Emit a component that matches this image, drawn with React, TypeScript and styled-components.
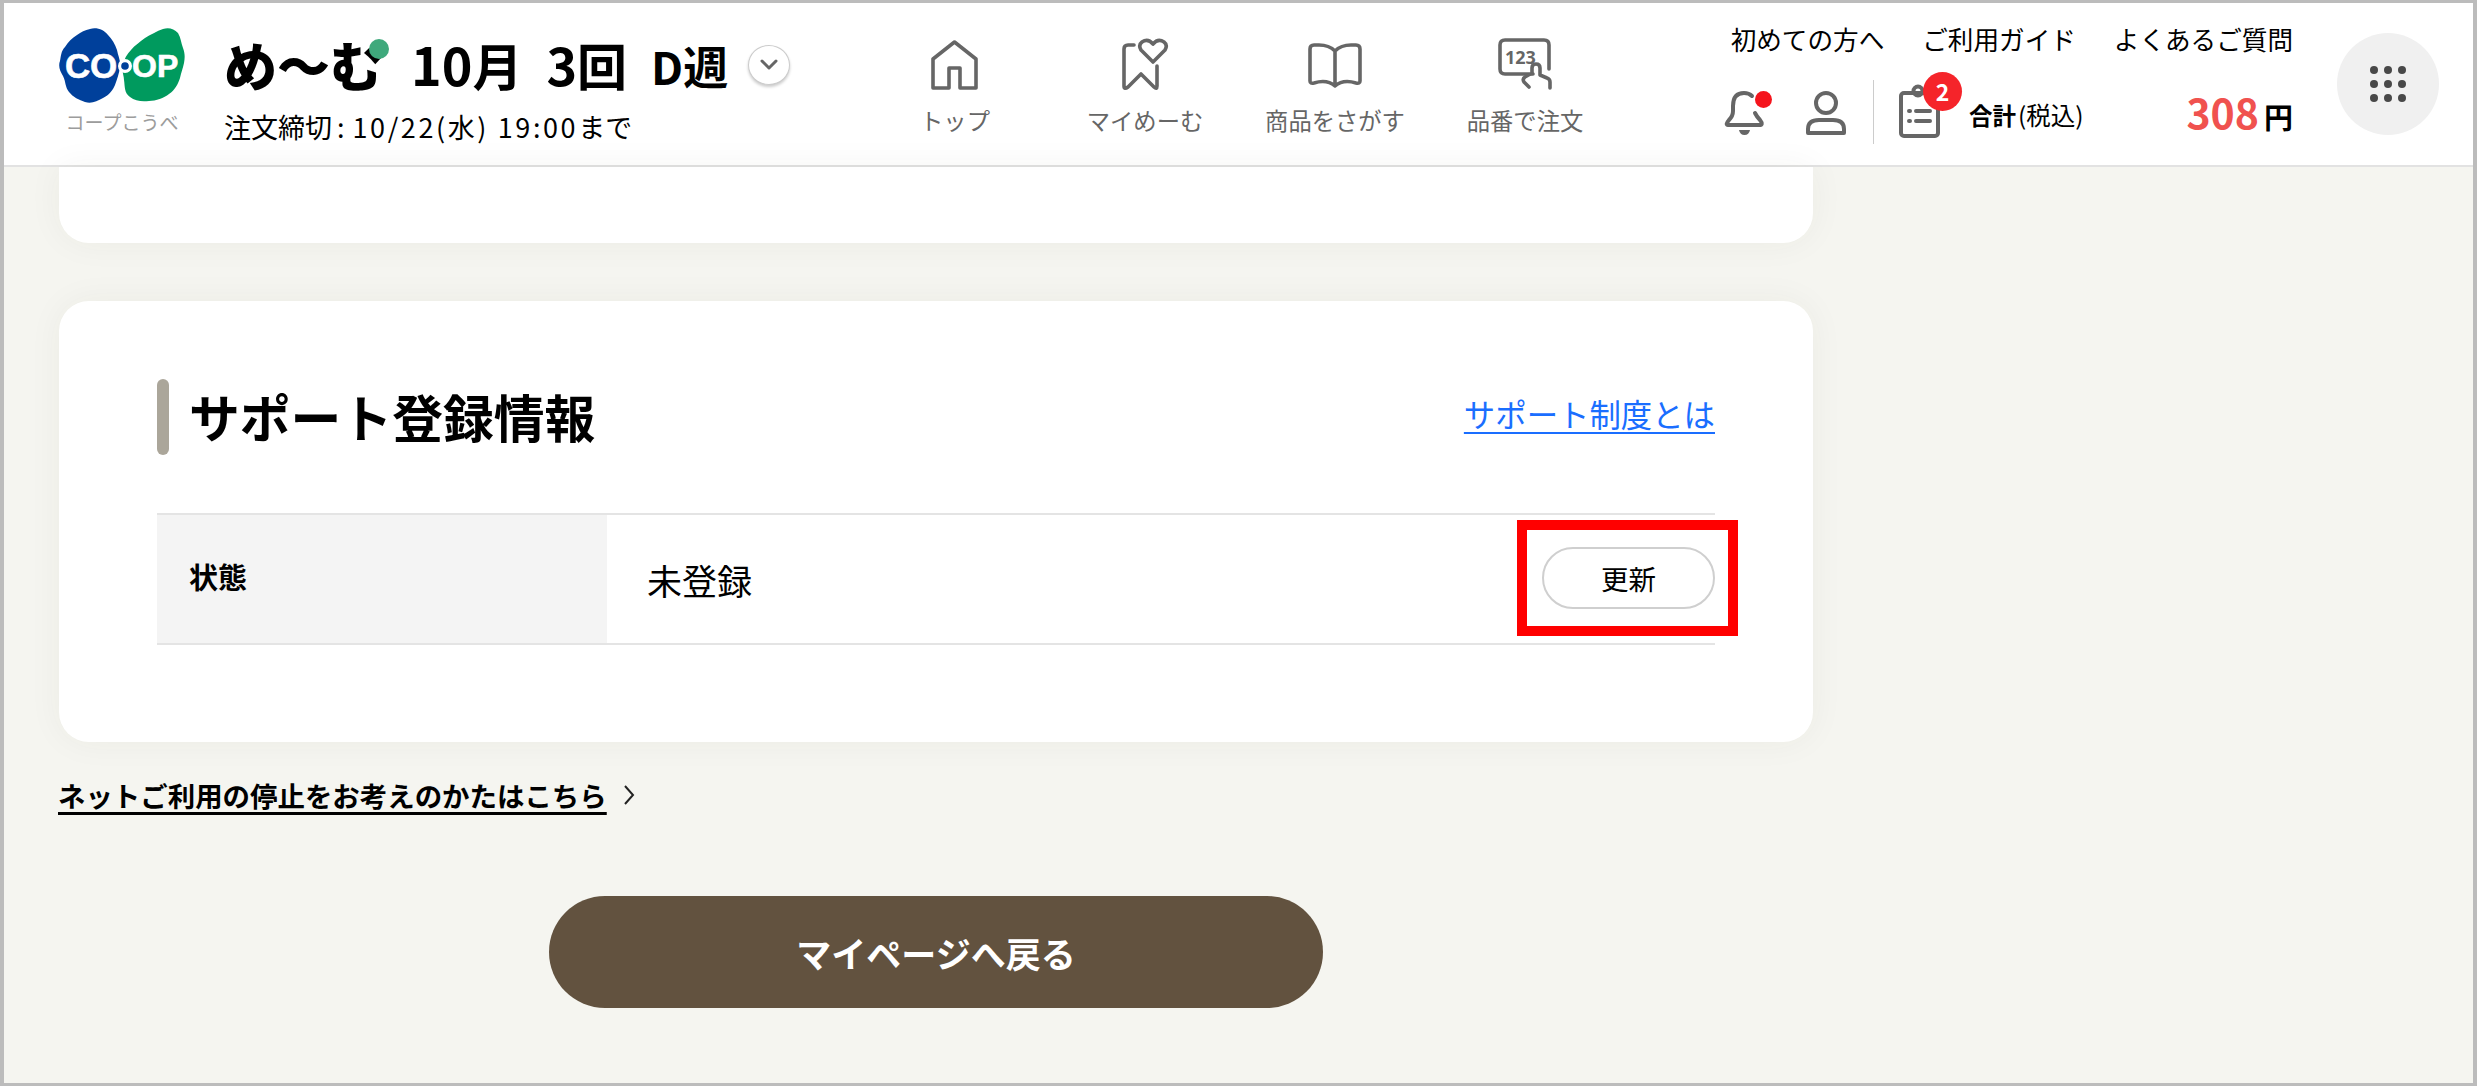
import styled, { createGlobalStyle } from "styled-components";

const GlobalStyle = createGlobalStyle`
  html, body {
    margin: 0;
    padding: 0;
    background: #fff;
  }
  body {
    font-family: "Noto Sans CJK JP", "Noto Sans", sans-serif;
    color: #000;
  }
  * {
    box-sizing: border-box;
  }
`;

const Frame = styled.div`
  width: 2477px;
  height: 1086px;
  border-style: solid;
  border-color: #bcbcbc;
  border-width: 3px 4px 3px 4px;
  background: #f5f5f0;
  overflow: hidden;
`;

const Header = styled.header`
  display: flex;
  height: 164px;
  background: #fff;
  border-bottom: 2px solid #e2e2e2;
`;

const Brand = styled.div`
  width: 165px;
  margin-left: 55px;
  padding-top: 25px;
  flex: none;
`;

const BrandName = styled.div`
  width: 126px;
  margin-top: 7px;
  text-align: center;
  font-size: 19px;
  line-height: 24px;
  color: #9c9c9c;
  white-space: nowrap;
`;

const Info = styled.div`
  width: 636px;
  flex: none;
  padding-top: 30px;
`;

const TitleRow = styled.div`
  display: flex;
  align-items: center;
  height: 62px;
  white-space: nowrap;
  font-weight: 700;
`;

const ServiceName = styled.span`
  position: relative;
  font-size: 53px;
  font-weight: 900;
  line-height: 62px;
  margin-right: 28px;
`;

const ServiceDot = styled.i`
  position: absolute;
  right: -6px;
  top: 6px;
  width: 20px;
  height: 20px;
  border-radius: 50%;
  background: #3fa97c;
`;

const Issue = styled.span<{ $gap?: number }>`
  font-size: 52px;
  line-height: 62px;
  margin-right: ${(p) => p.$gap ?? 0}px;
`;

const Unit = styled.span<{ $size?: number }>`
  font-size: ${(p) => p.$size ?? 50}px;
`;

const WeekButton = styled.button`
  width: 42px;
  height: 40px;
  margin: 2px 0 0 20px;
  padding: 0;
  display: flex;
  align-items: center;
  justify-content: center;
  background: #fff;
  border: 1px solid #ccc;
  border-radius: 50%;
  box-shadow: 0 2px 3px rgba(0, 0, 0, 0.2);
`;

const Deadline = styled.div`
  margin-top: 13px;
  font-size: 27px;
  line-height: 38px;
  white-space: nowrap;
`;

const DeadlineColon = styled.span`
  margin-left: 5px;
`;

const DeadlineDate = styled.span`
  letter-spacing: 2.6px;
  margin-left: 8px;
`;

const Nav = styled.nav`
  display: flex;
  width: 760px;
  flex: none;
  padding-top: 34px;
`;

const NavItem = styled.a`
  width: 190px;
  display: flex;
  flex-direction: column;
  align-items: center;
  color: #666;
  font-size: 23.3px;
  line-height: 30px;
  white-space: nowrap;
`;

const NavIcon = styled.svg`
  display: block;
  height: 54px;
  margin-bottom: 14px;
  fill: none;
  stroke: #666;
  stroke-width: 3.6;
  stroke-linecap: round;
  stroke-linejoin: round;
`;

const Utility = styled.div`
  width: 568px;
  flex: none;
  margin-left: 105px;
`;

const GuideLinks = styled.div`
  display: flex;
  justify-content: flex-end;
  gap: 38px;
  padding-top: 18px;
  font-size: 25.6px;
  line-height: 36px;
  white-space: nowrap;
`;

const UtilityRow = styled.div`
  display: flex;
  align-items: flex-start;
  margin-top: 31px;
`;

const IconSlot = styled.div<{ $width: number; $lift?: number }>`
  position: relative;
  flex: none;
  width: ${(p) => p.$width}px;
  margin-left: -3px;
  margin-top: ${(p) => -(p.$lift ?? 0)}px;
`;

const UtilityIcon = styled.svg`
  display: block;
  fill: none;
  stroke: #666;
  stroke-width: 4;
  stroke-linecap: round;
  stroke-linejoin: round;
`;

const NoticeDot = styled.i`
  position: absolute;
  left: 33px;
  top: 3px;
  width: 17px;
  height: 17px;
  border-radius: 50%;
  background: #f5141c;
`;

const Divider = styled.div`
  flex: none;
  width: 1px;
  height: 64px;
  margin: -8px 27px 0 24px;
  background: #ccc;
`;

const CartBadge = styled.span`
  position: absolute;
  left: 25px;
  top: -10px;
  width: 39px;
  height: 39px;
  border-radius: 50%;
  background: #f5242a;
  color: #fff;
  font-size: 23px;
  font-weight: 700;
  line-height: 38px;
  text-align: center;
`;

const TotalLabel = styled.div`
  margin: 10px 0 0 27px;
  font-size: 23.5px;
  font-weight: 700;
  line-height: 34px;
  white-space: nowrap;
  small {
    font-size: 24.5px;
    font-weight: 400;
    margin-left: 2px;
  }
`;

const Price = styled.div`
  margin-left: auto;
  display: flex;
  align-items: baseline;
  font-weight: 700;
  line-height: 50px;
  white-space: nowrap;
  margin-top: -2px;
`;

const PriceValue = styled.span`
  font-size: 41px;
  color: #f0524f;
  margin-right: 5px;
`;

const PriceUnit = styled.span`
  font-size: 29px;
`;

const GridButton = styled.button`
  flex: none;
  width: 102px;
  height: 102px;
  margin: 30px 0 0 44px;
  padding: 0;
  border: 0;
  border-radius: 50%;
  background: #f0f0f0;
  display: flex;
  align-items: center;
  justify-content: center;
`;

const GridDots = styled.div`
  display: grid;
  grid-template-columns: repeat(3, 8px);
  grid-auto-rows: 8px;
  gap: 6px;
  i {
    background: #484848;
    border-radius: 50%;
  }
`;

const Main = styled.main`
  width: 1754px;
  margin-left: 55px;
`;

const Card = styled.section`
  background: #fff;
  border-radius: 30px;
  box-shadow: 0 0 34px rgba(60, 60, 40, 0.05);
`;

const CutCard = styled(Card)`
  height: 76px;
  border-radius: 0 0 30px 30px;
`;

const SupportCard = styled(Card)`
  height: 441px;
  margin-top: 58px;
  padding: 78px 98px 0;
`;

const SectionHead = styled.div`
  display: flex;
  align-items: center;
  justify-content: space-between;
  height: 76px;
`;

const SectionTitle = styled.h2`
  margin: 0;
  height: 76px;
  padding-left: 32px;
  position: relative;
  font-size: 50.8px;
  font-weight: 700;
  line-height: 74px;
  white-space: nowrap;
  &::before {
    content: "";
    position: absolute;
    left: 0;
    top: 0;
    width: 12px;
    height: 76px;
    border-radius: 6px;
    background: #aba69a;
  }
`;

const InfoLink = styled.a`
  margin-top: -6px;
  color: #1a6eff;
  font-size: 31.4px;
  line-height: 44px;
  text-decoration: underline;
  text-decoration-thickness: 2px;
  text-underline-offset: 5px;
  white-space: nowrap;
`;

const StatusRow = styled.div`
  display: flex;
  height: 132px;
  margin-top: 58px;
  border-top: 2px solid #e4e4e4;
  border-bottom: 2px solid #e4e4e4;
`;

const StatusLabel = styled.div`
  width: 450px;
  flex: none;
  padding: 0 0 6px 32px;
  display: flex;
  align-items: center;
  background: #f4f4f4;
  font-size: 29px;
  font-weight: 700;
`;

const StatusValue = styled.div`
  flex: 1;
  display: flex;
  align-items: center;
  justify-content: space-between;
  padding-left: 40px;
  font-size: 35px;
`;

const UpdateWrap = styled.div`
  position: relative;
  margin-top: -2px;
`;

const UpdateButton = styled.button`
  display: block;
  width: 173px;
  height: 62px;
  padding: 0;
  background: #fff;
  border: 2px solid #cfcfcf;
  border-radius: 31px;
  font-family: inherit;
  font-size: 27.5px;
  color: #000;
`;

const Highlight = styled.div`
  position: absolute;
  inset: -27px -23px -27px -25px;
  border: 10px solid #ff0000;
  pointer-events: none;
`;

const StopLink = styled.div`
  display: flex;
  align-items: center;
  gap: 16px;
  margin: 33px 0 0 -1px;
  font-size: 27.45px;
  font-weight: 700;
  line-height: 40px;
  white-space: nowrap;
  a {
    text-decoration: underline;
    text-decoration-thickness: 3px;
    text-underline-offset: 5px;
  }
`;

const BackButton = styled.button`
  display: block;
  width: 774px;
  height: 112px;
  margin: 81px auto 0;
  padding: 0;
  border: 0;
  border-radius: 56px;
  background: #62523f;
  color: #fff;
  font-family: inherit;
  font-size: 35px;
  font-weight: 700;
`;

function CoopLogo() {
  return (
    <svg width="126" height="75" viewBox="0 0 126 75" style={{ display: "block" }}>
      <path
        fill="#00409b"
        d="M31 1c7-2 14 1 18 6 4 4 7 9 9 15 1 6 4 11 3 17-1 7-3 12-5 18-2 5-6 10-12 13-6 3-11 6-18 4C20 72 14 69 10 64 6 59 7 54 4 48 1 43-1 38 1 33c1-5 1-10 5-14 3-5 7-9 12-12 4-3 8-5 13-6z"
      />
      <path
        fill="#009a5e"
        d="M104 1c6-2 11 0 15 4 3 5 3 10 5 15 2 5 2 10 1 15-1 5-3 10-4 15-2 6-5 12-11 16-5 4-13 7-20 7-7 1-14 0-19-4-6-4-5-11-6-17 0-5-3-10-1-15 1-6 4-11 8-15 4-5 9-8 14-12 5-3 12-7 18-9z"
      />
      <circle cx="66" cy="38" r="7" fill="#fff" />
      <circle cx="66" cy="38" r="3.8" fill="#00409b" />
      <g fill="#fff" stroke="#fff" strokeWidth="0.6" fontFamily="'Liberation Sans', sans-serif" fontWeight="700">
        <text x="6" y="50" fontSize="35">C</text>
        <text x="31" y="50" fontSize="35">O</text>
        <text x="73" y="49" fontSize="32">O</text>
        <text x="98" y="49" fontSize="32">P</text>
      </g>
    </svg>
  );
}

function HomeIcon() {
  return (
    <NavIcon width="48" viewBox="0 0 48 54">
      <path d="M23.5 5 L45 22 V51 H29 V31 H18 V51 H2 V22 Z" />
    </NavIcon>
  );
}

function MyMemuIcon() {
  return (
    <NavIcon width="48" viewBox="0 0 48 54">
      <path d="M13 8 H7 Q3 8 3 12 V49 Q3 53 7 50 L20 37 L33 50 Q36 53 36 49 V29" />
      <path d="M32 25 L20 13 Q17 8 21 5 Q27 1 32 7 Q37 1 43 5 Q47 8 44 13 Z" />
    </NavIcon>
  );
}

function BookIcon() {
  return (
    <NavIcon width="56" viewBox="0 0 56 54">
      <path d="M28 14 Q22 8 12 8 H7 Q3 8 3 12 V44 Q3 47 7 46 Q20 42 28 49 Q36 42 49 46 Q53 47 53 44 V12 Q53 8 49 8 H44 Q34 8 28 14 Z M28 14 V49" />
    </NavIcon>
  );
}

function NumberIcon() {
  return (
    <NavIcon width="56" viewBox="0 0 56 54">
      <path d="M36 37 H8 Q3 37 3 32 V8 Q3 3 8 3 H47 Q52 3 52 8 V32" />
      <text x="8" y="27" fontSize="18" fontWeight="700" fill="#666" stroke="none" fontFamily="'Noto Sans', sans-serif">123</text>
      <path d="M32 50 L27 45 Q25 42 28 40 L35 36 V31 Q35 27 39 27 Q43 27 43 31 V38 L50 41 Q53 42 53 45 V51" />
    </NavIcon>
  );
}

function BellIcon() {
  return (
    <UtilityIcon width="50" height="50" viewBox="0 0 50 50">
      <path d="M30 8 Q27 5 22 5 Q11 5 11 18 V23 Q11 28 7 32 Q3 37 6 37 H37 Q42 37 38 32 Q35 29 33 25" />
      <path fill="#666" stroke="none" d="M17 42 H28 Q27 47 22.5 47 Q18 47 17 42 Z" />
    </UtilityIcon>
  );
}

function PersonIcon() {
  return (
    <UtilityIcon width="46" height="50" viewBox="0 0 46 50">
      <circle cx="23" cy="15" r="10" />
      <path d="M5 45 V41 Q5 32 16 32 H30 Q41 32 41 41 V45 Z" />
    </UtilityIcon>
  );
}

function ListIcon() {
  return (
    <UtilityIcon width="44" height="56" viewBox="0 0 44 56">
      <rect x="3" y="11" width="37" height="43" rx="3" />
      <circle cx="20" cy="9" r="4.5" />
      <path d="M18 29 H32 M18 39 H32" />
      <path d="M11 29 H12 M11 39 H12" />
    </UtilityIcon>
  );
}

export default function App() {
  return (
    <Frame>
      <GlobalStyle />
      <Header>
        <Brand>
          <CoopLogo />
          <BrandName>コープこうべ</BrandName>
        </Brand>
        <Info>
          <TitleRow>
            <ServiceName>
              め〜む
              <ServiceDot />
            </ServiceName>
            <Issue $gap={24}>
              10<Unit>月</Unit>
            </Issue>
            <Issue $gap={24}>
              3<Unit>回</Unit>
            </Issue>
            <Issue>
              <Unit $size={45}>D週</Unit>
            </Issue>
            <WeekButton aria-label="週を選ぶ">
              <svg width="18" height="12" viewBox="0 0 18 12" fill="none" stroke="#666" strokeWidth="3" strokeLinecap="round" strokeLinejoin="round">
                <path d="M2 2 L9 9 L16 2" />
              </svg>
            </WeekButton>
          </TitleRow>
          <Deadline>
            注文締切<DeadlineColon>:</DeadlineColon>
            <DeadlineDate>10/22(水) 19:00</DeadlineDate>まで
          </Deadline>
        </Info>
        <Nav>
          <NavItem>
            <HomeIcon />
            トップ
          </NavItem>
          <NavItem>
            <MyMemuIcon />
            マイめーむ
          </NavItem>
          <NavItem>
            <BookIcon />
            商品をさがす
          </NavItem>
          <NavItem>
            <NumberIcon />
            品番で注文
          </NavItem>
        </Nav>
        <Utility>
          <GuideLinks>
            <span>初めての方へ</span>
            <span>ご利用ガイド</span>
            <span>よくあるご質問</span>
          </GuideLinks>
          <UtilityRow>
            <IconSlot $width={84}>
              <BellIcon />
              <NoticeDot />
            </IconSlot>
            <IconSlot $width={46}>
              <PersonIcon />
            </IconSlot>
            <Divider />
            <IconSlot $width={44} $lift={6}>
              <ListIcon />
              <CartBadge>2</CartBadge>
            </IconSlot>
            <TotalLabel>
              合計<small>(税込)</small>
            </TotalLabel>
            <Price>
              <PriceValue>308</PriceValue>
              <PriceUnit>円</PriceUnit>
            </Price>
          </UtilityRow>
        </Utility>
        <GridButton aria-label="メニュー">
          <GridDots>
            {Array.from({ length: 9 }, (_, i) => (
              <i key={i} />
            ))}
          </GridDots>
        </GridButton>
      </Header>
      <Main>
        <CutCard />
        <SupportCard>
          <SectionHead>
            <SectionTitle>サポート登録情報</SectionTitle>
            <InfoLink>サポート制度とは</InfoLink>
          </SectionHead>
          <StatusRow>
            <StatusLabel>状態</StatusLabel>
            <StatusValue>
              未登録
              <UpdateWrap>
                <UpdateButton>更新</UpdateButton>
                <Highlight />
              </UpdateWrap>
            </StatusValue>
          </StatusRow>
        </SupportCard>
        <StopLink>
          <a>ネットご利用の停止をお考えのかたはこちら</a>
          <svg width="12" height="22" viewBox="0 0 12 22" fill="none" stroke="#222" strokeWidth="2">
            <path d="M2 2 L10 11 L2 20" />
          </svg>
        </StopLink>
        <BackButton>マイページへ戻る</BackButton>
      </Main>
    </Frame>
  );
}
